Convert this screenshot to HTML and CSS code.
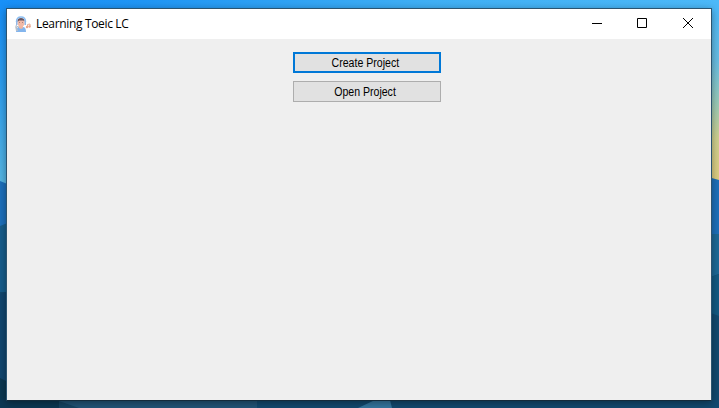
FILE: index.html
```
<!DOCTYPE html>
<html lang="en">
<head>
<meta charset="utf-8">
<title>Learning Toeic LC</title>
<link rel="stylesheet" href="styles.css">
</head>
<body>
<svg class="wallpaper" viewBox="0 0 719 408" aria-hidden="true">
  <defs>
    <linearGradient id="sky"><stop offset="0" stop-color="#1890f8"/><stop offset=".2" stop-color="#2096f5"/><stop offset=".6" stop-color="#40b0f5"/><stop offset="1" stop-color="#4cb9f9"/></linearGradient>
    <linearGradient id="left" x2="0" y2="1"><stop offset="0" stop-color="#1890f8"/><stop offset=".4" stop-color="#2b9df0"/><stop offset="1" stop-color="#58b8e4"/></linearGradient>
    <linearGradient id="right" x2="0" y2="1"><stop offset="0" stop-color="#4cb9f9"/><stop offset=".3" stop-color="#68bde4"/><stop offset=".55" stop-color="#9bcbb8"/><stop offset=".75" stop-color="#cfd08f"/><stop offset="1" stop-color="#dfcd80"/></linearGradient>
  </defs>
  <rect width="719" height="408" fill="#124a70"/>
  <rect width="719" height="12" fill="url(#sky)"/>
  <rect y="8" width="10" height="180" fill="url(#left)"/>
  <rect x="708" y="8" width="11" height="174" fill="url(#right)"/>
  <path d="M0 181l10 4v41H0z" fill="#1c70bc"/>
  <path d="M0 226l10-4v70H0z" fill="#165d8c"/>
  <path d="M0 294l10-3v90H0z" fill="#11466f"/>
  <path d="M0 378l10 5v25H0z" fill="#0c3852"/>
  <path d="M708 177l11 3v54h-11z" fill="#1d70ba"/>
  <path d="M708 234h11v40l-11 4z" fill="#1d6997"/>
  <path d="M708 278l11-4v42l-11-4z" fill="#145a83"/>
  <path d="M0 398h59v10H0z" fill="#0c3854"/>
  <path d="M59 398h198v10H59z" fill="#225578"/>
  <path d="M59 401l20 7H59z" fill="#164564"/>
  <path d="M358 408l17-8h15l2 8z" fill="#3477a0"/>
</svg>
<main class="window">
  <header class="titlebar">
    <svg class="app-icon" viewBox="0 0 16 16" aria-hidden="true">
      <path d="M1 16q0-5 4-5h3q3 0 3 5z" fill="#83b5ed"/>
      <path d="M4 10h4v2L6 13l-2-1z" fill="#efb49f"/>
      <path d="M2.500 4h7v4q-1 3-3.500 3T2.500 8z" fill="#f1b9a6"/>
      <path d="M2.500 5Q2.500 2 6 2t3.500 3L8 4.500H4L2.500 6z" fill="#68545f"/>
      <path d="M1.500 6Q1.500 1 6 1T10.500 6" fill="none" stroke="#8bbdf0" stroke-width="1.500"/>
      <path d="M1 5h1.500v4H1zm8.500 0H11v4H9.500z" fill="#91b8e8"/>
      <path d="M1 9q0 2 3 2" fill="none" stroke="#8496ad" stroke-width=".7"/>
      <path d="M4 6.500h1m2 0h1" stroke="#8a6c76" stroke-width=".7"/>
      <path d="M0 10l2 1 1 4H1z" fill="#b9c1cc"/>
      <path d="M12.500 11V8.500L15 8v2.500" fill="none" stroke="#e8a58b" stroke-width=".9"/>
      <circle cx="12" cy="11" r="1.200" fill="#e8a58b"/><circle cx="14.500" cy="10.500" r="1.200" fill="#e8a58b"/>
    </svg>
    <h1 class="title">Learning Toeic LC</h1>
    <div class="controls">
      <svg class="control" viewBox="0 0 46 30" role="img" aria-label="Minimize"><path d="M19 14.500h10"/></svg>
      <svg class="control" viewBox="0 0 46 30" role="img" aria-label="Maximize"><path d="M18.500 9.500h9v9h-9z"/></svg>
      <svg class="control" viewBox="0 0 46 30" role="img" aria-label="Close"><path d="M18 9l10 10M28 9L18 19"/></svg>
    </div>
  </header>
  <section class="actions">
    <button class="button button-default"><span class="label">Create Project</span></button>
    <button class="button"><span class="label">Open Project</span></button>
  </section>
</main>
</body>
</html>
```
FILE: styles.css
```
* { box-sizing: border-box; }
body {
  margin: 0;
  padding: 8px 7px 7px 6px;
  height: 408px;
  overflow: hidden;
  font-family: "Open Sans", "Noto Sans", sans-serif;
}
.wallpaper {
  position: absolute;
  inset: 0;
  width: 719px;
  height: 408px;
  z-index: -1;
}
.window {
  height: 393px;
  border: 1px solid #2b5470;
  border-bottom-color: #142b3b;
  background: #efefef;
  background-clip: padding-box;
  box-shadow: 0 2px 8px rgba(0, 0, 0, .38);
}
.titlebar {
  display: flex;
  align-items: center;
  height: 30px;
  padding-left: 8px;
  background: #fff;
}
.app-icon { width: 16px; height: 16px; }
.title {
  margin: 0 0 0 5px;
  font-size: 12px;
  line-height: 16px;
  font-weight: 400;
  letter-spacing: -.34px;
  color: #000;
}
.controls {
  display: flex;
  margin-left: auto;
}
.control {
  width: 46px;
  height: 30px;
  fill: none;
  stroke: #000;
  stroke-width: 1;
}
.actions {
  display: flex;
  flex-direction: column;
  gap: 8px;
  padding: 13px 0 0 286px;
}
.button {
  display: flex;
  align-items: center;
  justify-content: center;
  width: 148px;
  height: 21px;
  padding: 1px 3px 0 0;
  border: 1px solid #adadad;
  border-radius: 0;
  background: #e1e1e1;
  color: #000;
  font-family: "Liberation Sans", sans-serif;
  font-size: 12px;
  line-height: 16px;
}
.button-default { border: 2px solid #0078d7; }
.label {
  display: block;
  white-space: nowrap;
  transform: scaleX(.88);
}
```
